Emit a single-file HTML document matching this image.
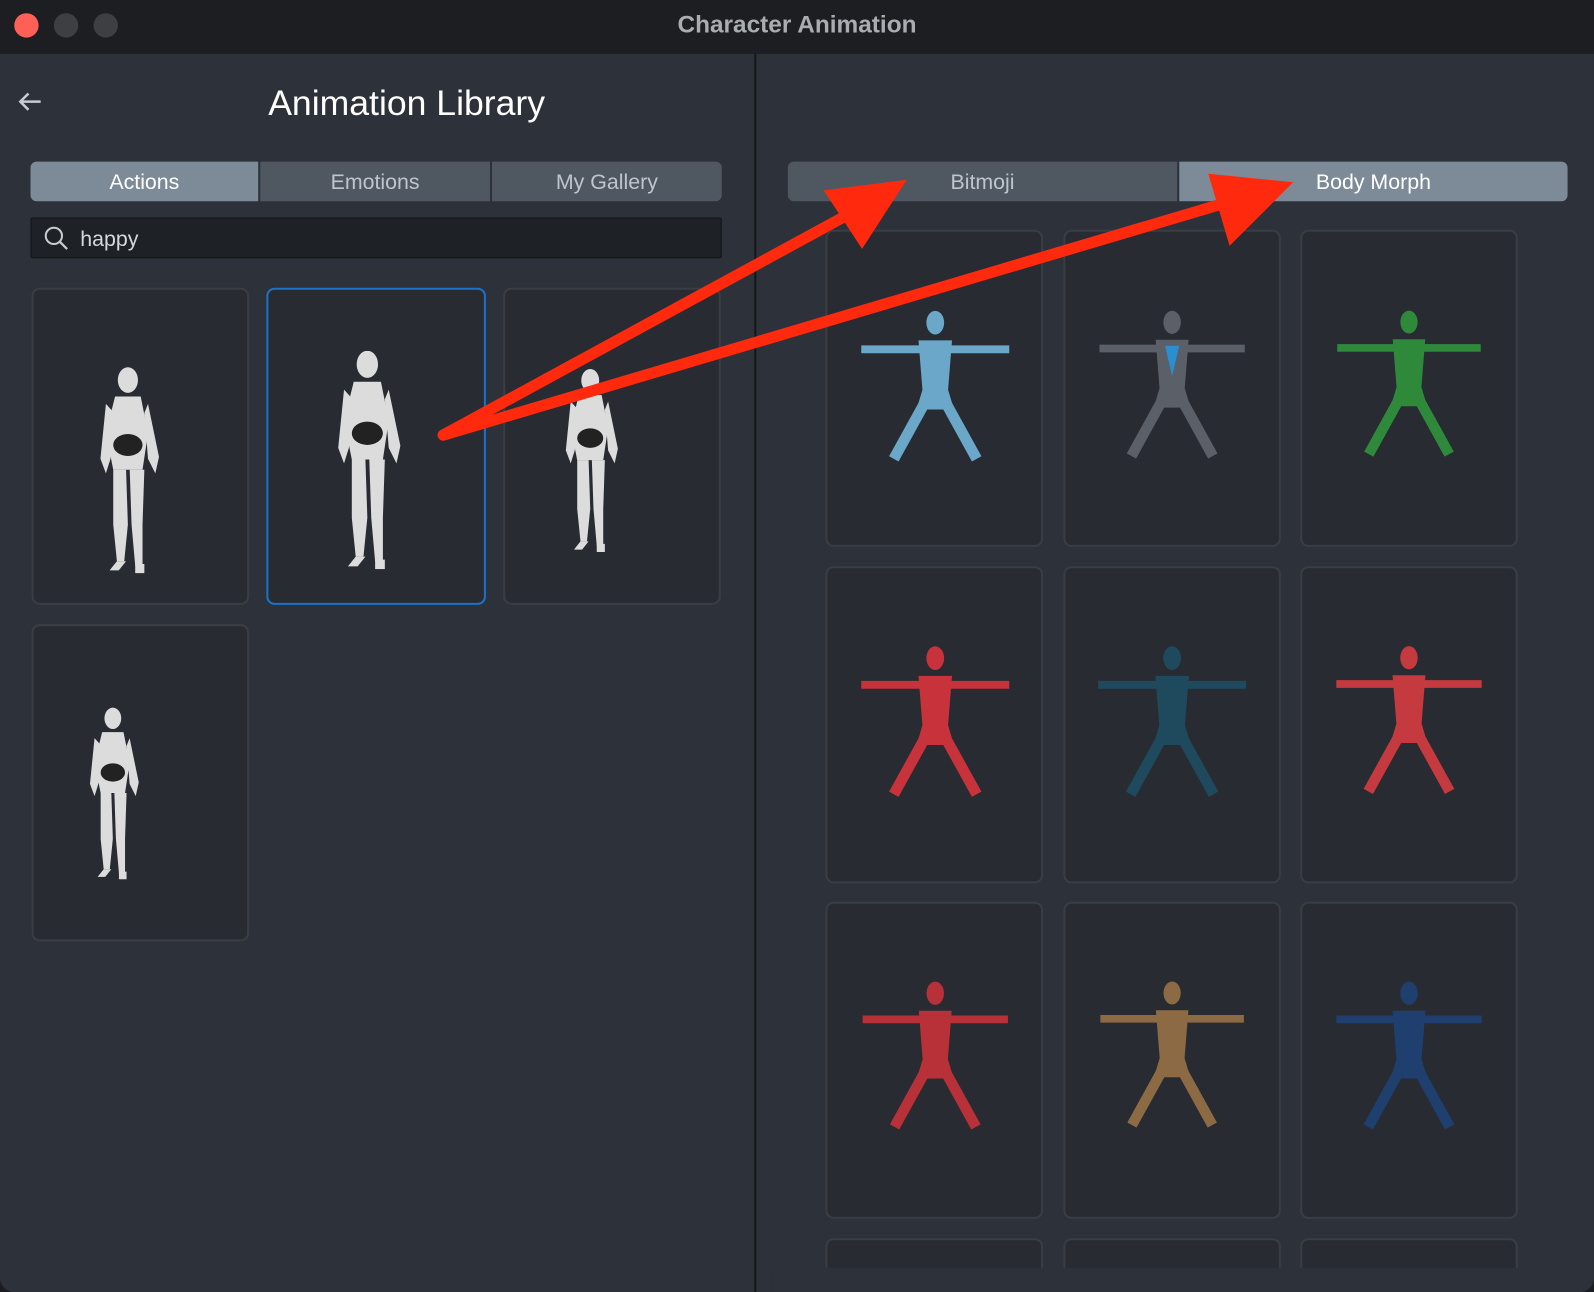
<!DOCTYPE html>
<html><head><meta charset="utf-8"><style>
html,body{margin:0;padding:0;background:#1b1d21;width:1594px;height:1292px;overflow:hidden}
#w{position:absolute;left:0;top:0;width:1568px;height:1271px;transform:scale(1.01658);transform-origin:0 0;background:#2d3139;border-radius:0 0 14px 14px;overflow:hidden;font-family:"Liberation Sans",sans-serif}
.tb{position:absolute;left:0;top:0;width:1568px;height:53px;background:#1c1e22}
.dot{position:absolute;top:13px;width:24px;height:24px;border-radius:50%;background:#3d3f43}
.title{position:absolute;top:11px;left:0;width:1568px;text-align:center;color:#a9acb0;font-weight:bold;font-size:24px}
.div{position:absolute;left:742px;top:53px;width:2px;height:1218px;background:#15171a}
.h{position:absolute;left:0;width:800px;top:80px;text-align:center;color:#fff;font-size:35px;left:0px}
.tab{position:absolute;top:159px;height:39px;line-height:41px;text-align:center;font-size:21px;color:#bfc5cc;background:#4f5761}
.on{background:#7d8a97;color:#fff}
.search{position:absolute;left:30px;top:214px;width:678px;height:38px;background:#1e2126;border:1px solid #121316;border-radius:2px}
.card{position:absolute;box-sizing:border-box;background:#282b32;border:2px solid #3a3d44;border-radius:8px}
.sel{border-color:#1a73c9}
svg.f{position:absolute}
</style></head><body><div id="w">
<div class="tb"></div>
<div class="dot" style="left:14px;background:#fe5f57"></div>
<div class="dot" style="left:53px"></div>
<div class="dot" style="left:92px"></div>
<div class="title">Character Animation</div>
<div class="div"></div>
<svg style="position:absolute;left:16px;top:88px" width="28" height="24"><path d="M24 12H4M12 4L4 12L12 20" stroke="#c8ccd2" stroke-width="2.5" fill="none"/></svg>
<div class="h" style="top:82px">Animation Library</div>
<div class="tab on" style="left:30px;width:224px;border-radius:6px 0 0 6px">Actions</div>
<div class="tab" style="left:256px;width:226px">Emotions</div>
<div class="tab" style="left:484px;width:226px;border-radius:0 6px 6px 0">My Gallery</div>
<div class="search"><svg style="position:absolute;left:12px;top:7px" width="26" height="26"><circle cx="10" cy="10" r="8" stroke="#c8ccd2" stroke-width="2" fill="none"/><path d="M16 16L23 23" stroke="#c8ccd2" stroke-width="2.2"/></svg><span style="position:absolute;left:48px;top:9px;color:#d5d9de;font-size:21px">happy</span></div>
<div class="card" style="left:31px;top:283px;width:214px;height:312px"></div>
<div class="card sel" style="left:262px;top:283px;width:216px;height:312px"></div>
<div class="card" style="left:495px;top:283px;width:214px;height:312px"></div>
<div class="card" style="left:31px;top:614px;width:214px;height:312px"></div>
<svg width="0" height="0" style="position:absolute"><defs>
<symbol id="rb" viewBox="0 0 80 225"><g fill="#dcdcdc"><ellipse cx="32" cy="14" rx="11" ry="14"/><path d="M18 32h28l8 40-6 40H16l-8-40z"/><path d="M8 40l-6 60 6 16 5-16 4-50z"/><path d="M54 40l12 58-4 18-8-16-4-50z"/><path d="M16 112h14l2 60-4 40h-8l-4-40z"/><path d="M34 112h16l-2 60 0 45h-8l-4-45z"/><path d="M20 212h10l-8 10h-10z"/><path d="M40 215h10v10h-10z"/></g><ellipse cx="32" cy="85" rx="16" ry="12" fill="#222"/></symbol>
<symbol id="tp" viewBox="0 0 160 170"><g fill="currentColor" stroke="currentColor"><ellipse cx="80" cy="20" rx="9" ry="12" stroke="none"/><path d="M5 47H155" stroke-width="8"/><path d="M63 38h34l-4 50 6 20H61l6-20z" stroke="none"/><path d="M70 100L38 158M90 100L122 158" stroke-width="11" fill="none"/></g></symbol>
</defs></svg>
<svg class="f" style="left:97px;top:350px" width="72" height="225"><use href="#rb"/></svg>
<svg class="f" style="left:328px;top:345px" width="82" height="215"><use href="#rb"/></svg>
<svg class="f" style="left:555px;top:348px" width="64" height="210"><use href="#rb"/></svg>
<svg class="f" style="left:87px;top:678px" width="60" height="205"><use href="#rb"/></svg>
<div class="tab" style="left:775px;width:383px;border-radius:6px 0 0 6px">Bitmoji</div>
<div class="tab on" style="left:1160px;width:382px;border-radius:0 6px 6px 0">Body Morph</div>
<div class="card" style="left:812px;top:226px;width:214px;height:312px"></div>
<div class="card" style="left:1046px;top:226px;width:214px;height:312px"></div>
<div class="card" style="left:1279px;top:226px;width:214px;height:312px"></div>
<div class="card" style="left:812px;top:557px;width:214px;height:312px"></div>
<div class="card" style="left:1046px;top:557px;width:214px;height:312px"></div>
<div class="card" style="left:1279px;top:557px;width:214px;height:312px"></div>
<div class="card" style="left:812px;top:887px;width:214px;height:312px"></div>
<div class="card" style="left:1046px;top:887px;width:214px;height:312px"></div>
<div class="card" style="left:1279px;top:887px;width:214px;height:312px"></div>
<div class="card" style="left:812px;top:1218px;width:214px;height:60px"></div>
<div class="card" style="left:1046px;top:1218px;width:214px;height:60px"></div>
<div class="card" style="left:1279px;top:1218px;width:214px;height:60px"></div>
<div style="position:absolute;left:760px;top:1247px;width:808px;height:30px;background:#2d3139"></div>
<svg class="f" style="left:840px;top:298px;color:#6aa7c8" width="160" height="165"><use href="#tp"/></svg>
<svg class="f" style="left:1073px;top:298px;color:#5a5f68" width="160" height="162"><use href="#tp"/></svg>
<div style="position:absolute;left:1146px;top:340px;width:14px;height:30px;background:#2a8fd0;clip-path:polygon(0 0,100% 0,50% 100%)"></div>
<svg class="f" style="left:1306px;top:298px;color:#2e8a3a" width="160" height="160"><use href="#tp"/></svg>
<svg class="f" style="left:840px;top:628px;color:#c8323a" width="160" height="165"><use href="#tp"/></svg>
<svg class="f" style="left:1073px;top:628px;color:#1f4a5e" width="160" height="165"><use href="#tp"/></svg>
<svg class="f" style="left:1306px;top:628px;color:#c53a3f" width="160" height="162"><use href="#tp"/></svg>
<svg class="f" style="left:840px;top:958px;color:#b83038" width="160" height="162"><use href="#tp"/></svg>
<svg class="f" style="left:1073px;top:958px;color:#8c6a44" width="160" height="160"><use href="#tp"/></svg>
<svg class="f" style="left:1306px;top:958px;color:#1f3f6e" width="160" height="162"><use href="#tp"/></svg>
<svg class="f" style="left:0;top:0" width="1568" height="1271"><g fill="#ff2a0e" stroke="#ff2a0e" stroke-width="11" stroke-linecap="round"><path d="M436 428L862 196"/><path d="M436 428L1238 190" /><path d="M890 178L812 188L848 243Z" stroke-width="2"/><path d="M1270 180L1190 172L1210 240Z" stroke-width="2"/></g></svg>
</div></body></html>
